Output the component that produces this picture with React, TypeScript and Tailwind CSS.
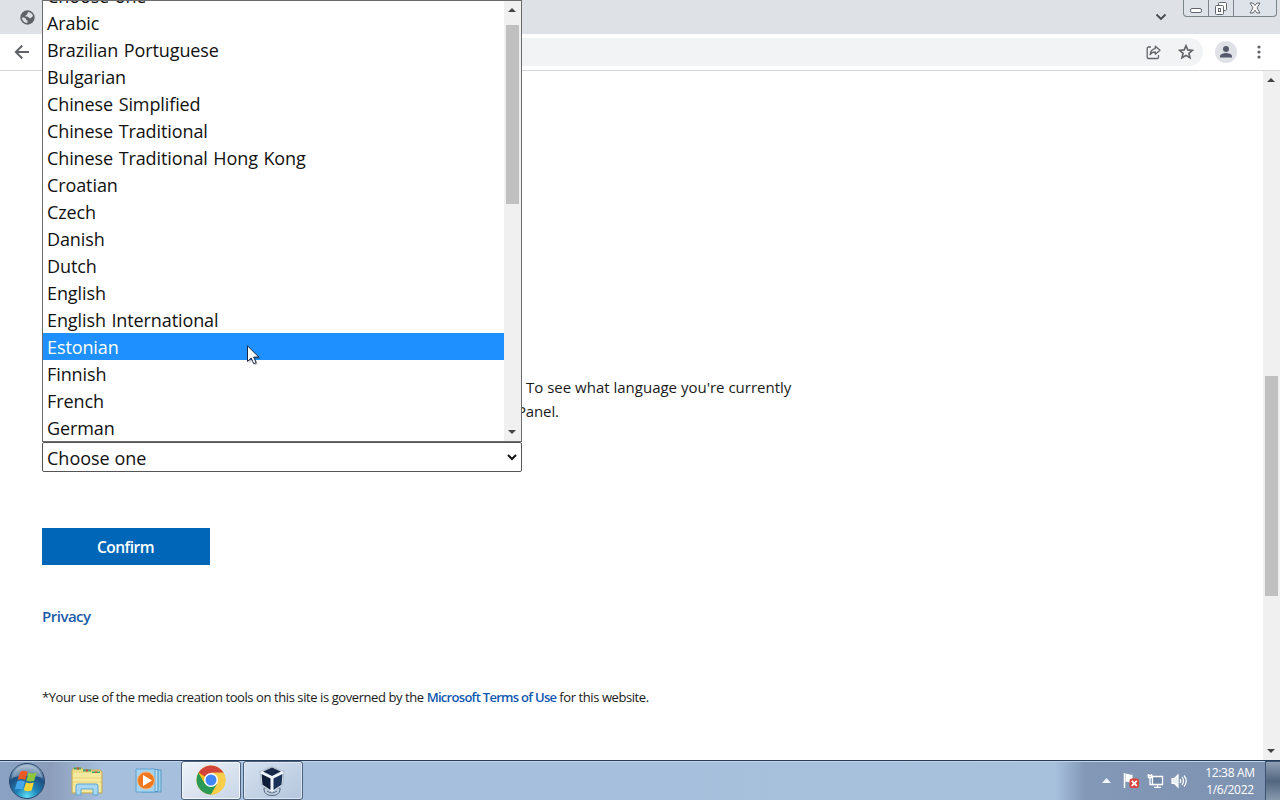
import React from 'react';

const LANGUAGES = [
    'Choose one',
    'Arabic',
    'Brazilian Portuguese',
    'Bulgarian',
    'Chinese Simplified',
    'Chinese Traditional',
    'Chinese Traditional Hong Kong',
    'Croatian',
    'Czech',
    'Danish',
    'Dutch',
    'English',
    'English International',
    'Estonian',
    'Finnish',
    'French',
    'German',
];

const Arrow: React.FC<{ down?: boolean }> = ({ down }) => (
    <svg width="8" height="4" viewBox="0 0 8 4" className={down ? 'mr-px rotate-180' : 'mr-px'}>
        <path d="M0 4 4 0l4 4z" fill="#444" />
    </svg>
);

const WindowButtons = () => (
    <div className="flex h-[17px] w-[94px] mr-[3px] rounded-b-[4px] border border-t-0 border-[#7d858c] bg-[#dde3e8]">
        <div className="w-[25px] border-r border-[#7d858c] flex items-end justify-center pb-[3px]">
            <div className="w-[12px] h-[5px] rounded-[2px] border border-[#60666c] bg-white" />
        </div>
        <div className="w-[25px] border-r border-[#7d858c] flex items-center justify-center">
            <svg width="14" height="14" viewBox="0 0 14 14" fill="#fff" stroke="#60666c">
                <rect x="4.5" y="1.5" width="8" height="8" rx="1" />
                <rect x="1.5" y="4.5" width="8" height="9" rx="1" />
                <rect x="4.5" y="7.5" width="2" height="3" />
            </svg>
        </div>
        <div className="flex-1 flex items-center justify-center">
            <svg width="12" height="12" viewBox="0 0 12 12" fill="#fff" stroke="#60666c">
                <path d="M1 1h3l2 2.5L8 1h3L8 5.9 11 11H8L6 8.3 4 11H1l3-5.1z" />
            </svg>
        </div>
    </div>
);

const TabStrip = () => (
    <div className="h-[34px] shrink-0 flex justify-between bg-[#dee1e6]">
        <div className="pl-[20px] pt-[10px]">
            <svg width="15" height="15" viewBox="0 0 15 15">
                <circle cx="7.5" cy="7.5" r="7.2" fill="#5f6368" />
                <path d="M8.2 1.9C6.9 2.7 8 4 7 4.7 6 5.2 5.4 5 5.5 6.4c1.6.2 3.3.2 3.7 1.6.9.4 2.3-.1 2.7-1 .3-.8.8-.9 1.2-.7C12.7 4 10.9 2 8.2 1.9zM1.9 7.6c1.6 0 3.7 0 4.1 1.6.1 1.2 1.5.8 1.7 1.8 0 .8-.6 1.1-.5 2C4.3 12.9 2.1 10.7 1.9 7.6z" fill="#dee1e6" />
            </svg>
        </div>
        <div className="flex items-start">
            <svg width="12" height="8" viewBox="0 0 12 8" className="mt-[13px] mr-[16px]" fill="none" stroke="#45484c" strokeWidth="1.8">
                <path d="M1.5 1.5 6 6l4.5-4.5" />
            </svg>
            <WindowButtons />
        </div>
    </div>
);

const Toolbar = () => (
    <div className="h-[37px] shrink-0 flex items-center bg-white border-b border-[#d5d7da] pl-[14px] pr-[19px]">
        <svg width="16" height="16" viewBox="0 0 16 16" fill="none" stroke="#5f6368" strokeWidth="1.9">
            <path d="M15 8H2M8.3 1.5 1.8 8l6.5 6.5" />
        </svg>
        <div className="ml-[90px] flex-1 h-[28px] rounded-full bg-[#f1f3f4] flex items-center justify-end gap-[17px] pr-[9px]">
            <svg width="15" height="15" viewBox="0 0 15 15" fill="none" stroke="#5f6368" strokeWidth="1.3" strokeLinejoin="round">
                <path d="M5 2H2.5a1.3 1.3 0 0 0-1.3 1.3v8.9a1.3 1.3 0 0 0 1.3 1.3h8.7a1.3 1.3 0 0 0 1.3-1.3V10" />
                <path d="M9.3 1.2 14 5.3 9.3 9.3V7C6.800 7 5.200 7.900 4.100 9.700 4.400 6.300 6.300 4 9.300 3.600z" />
            </svg>
            <svg width="16" height="16" viewBox="0 0 16 16" fill="none" stroke="#5f6368" strokeWidth="1.6">
                <path d="m8 1.7 1.8 4.2 4.6.4-3.500 3 1.100 4.500L8 11.400l-4 2.400 1.100-4.500-3.500-3 4.600-.4z" />
            </svg>
        </div>
        <svg width="22" height="22" viewBox="0 0 22 22" className="ml-[12px] mr-[20px]">
            <circle cx="11" cy="11" r="11" fill="#dfe1e7" />
            <circle cx="11" cy="8" r="3" fill="#55596a" />
            <path d="M5 16.5v-1.3c0-2.200 4-3.200 6-3.200s6 1 6 3.200v1.300z" fill="#55596a" />
        </svg>
        <svg width="4" height="14" viewBox="0 0 4 14" fill="#5f6368">
            <circle cx="2" cy="2" r="1.6" />
            <circle cx="2" cy="7" r="1.6" />
            <circle cx="2" cy="12" r="1.6" />
        </svg>
    </div>
);

const LanguageMenu = () => (
    <div className="absolute left-[42px] top-0 z-10 w-[480px] h-[442px] flex border border-[#6b6b6b] bg-white overflow-hidden">
        <ul className="flex-1 -mt-[19px] text-[18px] leading-[29px] tracking-[-0.1px] [word-spacing:1px]">
            {LANGUAGES.map((lang) => (
                <li
                    key={lang}
                    className={`h-[27px] pl-[4px] ${lang === 'Estonian' ? 'bg-[#1e90ff] text-white' : 'text-[#111]'}`}
                >
                    {lang}
                </li>
            ))}
        </ul>
        <div className="w-[17px] h-full bg-[#f0f0f0] flex flex-col items-center justify-between pt-[7px] pb-[7px]">
            <Arrow />
            <div className="w-[13px] h-[179px] bg-[#c0c0c0] mb-auto mt-[13px]" />
            <Arrow down />
        </div>
    </div>
);

const Cursor = () => (
    <svg width="16" height="22" viewBox="0 0 16 22" className="absolute left-[247px] top-[345px] z-20">
        <path d="M2 2.5v15.5l3.7-3.5 2.5 5.7 2.5-1.1-2.5-5.5h5.5z" fill="#000" opacity=".25" />
        <path d="M.5.8v15.7l3.7-3.5 2.5 5.7 2.5-1.1-2.5-5.5h5.1z" fill="#fff" stroke="#1b2540" />
    </svg>
);

const Page = () => (
    <div className="flex-1 min-h-0 flex bg-white">
        <main className="flex-1 pl-[42px] pt-[304px]">
            <p className="pl-[484px] text-[15px] leading-[24px] text-[#1a1a1a] whitespace-nowrap">
                To see what language you're currently
            </p>
            <p className="pl-[475px] text-[15px] leading-[24px] tracking-[-0.15px] text-[#1a1a1a]">Panel.</p>
            <div className="mt-[19px] w-[480px] h-[30px] border border-[#555] rounded-[2px] flex items-center justify-between pl-[4px] pr-[4px] text-[18px] text-[#111]">
                <span className="pt-[2px]">Choose one</span>
                <svg width="10" height="7" viewBox="0 0 10 7" fill="none" stroke="#111" strokeWidth="2">
                    <path d="M1 1l4 4 4-4" />
                </svg>
            </div>
            <button className="mt-[56px] w-[168px] h-[37px] pt-[2px] pr-[1px] flex items-center justify-center bg-[#0067b8] text-white text-[15.5px] font-semibold tracking-[-0.5px]">
                Confirm
            </button>
            <a className="block mt-[39px] text-[15px] leading-[24px] font-semibold tracking-[-0.5px] text-[#1a5ca8]">Privacy</a>
            <p className="mt-[59px] text-[13px] leading-[20px] tracking-[-0.42px] text-[#1a1a1a] whitespace-nowrap">
                <span>*Your use of the media creation tools on this site is governed by the </span>
                <a className="font-semibold tracking-[-0.7px] text-[#0f58b0]">Microsoft Terms of Use</a>
                <span> for this website.</span>
            </p>
        </main>
        <div className="w-[17px] bg-[#f0f0f0] flex flex-col items-center pt-[7px] pb-[7px]">
            <Arrow />
            <div className="w-[13px] h-[220px] bg-[#c0c0c0] mt-[294px] mb-auto" />
            <Arrow down />
        </div>
    </div>
);

const StartOrb = () => (
    <svg width="38" height="38" viewBox="0 0 38 38" className="ml-[8px]">
        <defs>
            <radialGradient id="orb" cx=".5" cy=".95" r=".9">
                <stop offset="0" stopColor="#5fe0f5" />
                <stop offset=".35" stopColor="#1f84b8" />
                <stop offset=".7" stopColor="#1c4f82" />
                <stop offset="1" stopColor="#8fa9c4" />
            </radialGradient>
        </defs>
        <circle cx="19" cy="19" r="17.5" fill="url(#orb)" stroke="#28486c" />
        <path d="M3.5 16C6 6 13 3 19 3s13 3 15.5 13C27 13 12 13 3.5 16z" fill="#fff" opacity=".3" />
        <path d="M12.5 9.5c2.5-1.3 4.8-1 7 .2L17.3 18c-2.2-1.3-4.5-1.5-7.7-.2z" fill="#ee5a24" />
        <path d="M20.5 10.5c2.5 1.3 4.8 1.3 8.2 0l-2.5 8.3c-2.5 1.2-5 1-7.9-.2z" fill="#8fc640" />
        <path d="M9.2 19.2c2.6-1.2 5-1 7.7.3l-2.3 8.2c-2.2-1.2-4.5-1.4-7.7-.3z" fill="#46a6ea" />
        <path d="M18 20.2c2.4 1.3 4.8 1.3 7.900.2l-2.300 8.200c-2.500 1.100-5 1-7.900-.3z" fill="#fbd437" />
    </svg>
);

const ExplorerIcon = () => (
    <svg width="34" height="30" viewBox="0 0 34 30">
        <path d="M2 27V4l2-2h8l2 2h16l2 2v21z" fill="#eedb86" stroke="#c5aa55" />
        <path d="M4 2.5h7M13 4.5h8M22 6.5h8" stroke="#3fa56b" strokeWidth="2" />
        <path d="M7 2.5h2M16 4.5h2M25 6.5h2" stroke="#d84a36" strokeWidth="2" />
        <path d="M3 7h28v19H3z" fill="#f6eaa0" />
        <path d="M3 12h28M3 16h28" stroke="#e9d47c" />
        <path d="M6 29v-9q0-2 2-2h18q2 0 2 2v9h-5v-6H11v6z" fill="#a8d7f2" stroke="#5ba5d2" />
    </svg>
);

const MediaIcon = () => (
    <svg width="28" height="26" viewBox="0 0 28 26">
        <path d="M6 2h20v22H6z" fill="#9fd0ec" stroke="#589ac5" />
        <path d="M3 1.5h20v22H3z" fill="#b8dff4" stroke="#4b94c6" />
        <path d="M1 1h19v23H1z" fill="#a7d3ee" stroke="#5da4d1" />
        <circle cx="11" cy="12.5" r="8.5" fill="#ee7820" stroke="#f8b26f" />
        <path d="M8 7v11l9-5.5z" fill="#fff" />
    </svg>
);

const ChromeIcon = () => (
    <svg width="30" height="30" viewBox="0 0 30 30">
        <circle cx="15" cy="15" r="14.5" fill="#fbc116" />
        <path d="M15 15 2.45 7.75A14.5 14.5 0 0 1 27.55 7.75H15z" fill="#d3443a" />
        <path d="M2.45 7.75A14.5 14.5 0 0 0 15 29.5l6.28-10.87L15 15l-6.28 3.62z" fill="#2c9a57" />
        <path d="M15 7.75h12.55A14.5 14.5 0 0 1 15 29.5l6.28-10.87z" fill="#f8cd4a" />
        <circle cx="15" cy="15" r="7" fill="#fff" />
        <circle cx="15" cy="15" r="5.5" fill="#4285f4" />
    </svg>
);

const VirtualBoxIcon = () => (
    <svg width="28" height="30" viewBox="0 0 28 30" className="mr-[2px]">
        <path d="M6 22v2q1 5.5 8 5.5t8-5.5v-2z" fill="#c5d3e2" stroke="#56687e" />
        <path d="M9 25q5 4 10 0" fill="none" stroke="#56687e" />
        <path d="M14 .7 26 5.5 24.5 19.5 14 26.5 3.5 19.5 2 5.5z" fill="#eef4fa" stroke="#8a9cb2" strokeWidth=".6" />
        <path d="M14 1.5 23 5.5 14 10 5 5.5z" fill="#16294a" />
        <path d="M3.5 8 12.5 12.5v11.5l-8-5.2z" fill="#0e1d38" />
        <path d="M24.5 8 15.5 12.5v11.5l8-5.2z" fill="#1b3158" />
    </svg>
);

const Tray = () => (
    <div className="flex items-center h-full">
        <svg width="9" height="5" viewBox="0 0 9 5" className="mr-[12px]">
            <path d="M0 5 4.5 0 9 5z" fill="#f3f7fb" />
        </svg>
        <svg width="17" height="17" viewBox="0 0 17 17" className="mr-[7px]">
            <path d="M1.5 1v15" stroke="#fff" strokeWidth="1.5" />
            <path d="M2.5 2c3-1 4 1.5 7 .5v8c-3 1-4-1.5-7-.5z" fill="#fff" />
            <rect x="6.5" y="6.5" width="9.5" height="9.5" rx="2.5" fill="#d8433c" />
            <path d="m8.8 8.8 5 5m0-5-5 5" stroke="#fff" strokeWidth="1.8" />
        </svg>
        <svg width="17" height="16" viewBox="0 0 17 16" className="mr-[7px]" fill="none" stroke="#fff" strokeWidth="1.3">
            <path d="M5.5 3.5h10v8h-10zM7 14.3h7M10.5 12v2" fill="#6f87a5" />
            <path d="M1.5 1v3.5h3V1M3 4.5v7h3M.5 2.5h5" />
        </svg>
        <svg width="17" height="16" viewBox="0 0 17 16" className="mr-[16px]" fill="none" stroke="#fff" strokeWidth="1.2">
            <path d="M1 5.5h2.5L7 2v12l-3.5-3.5H1z" fill="#e9eff5" />
            <path d="M9 6q1.5 2 0 4M11 4q3 4 0 8M13 2.5q4.5 5.5 0 11" />
        </svg>
        <div className="w-[52px] text-center text-[12px] leading-[17px] tracking-[-0.3px] text-white whitespace-nowrap">
            <div>12:38 AM</div>
            <div>1/6/2022</div>
        </div>
        <div className="ml-[9px] w-[15px] h-full border-l border-t border-[#3d5370] bg-linear-to-b from-[#8fa0b5] via-[#52667f] to-[#8699ae]" />
    </div>
);

const Taskbar = () => (
    <div className="h-[40px] shrink-0 flex items-center justify-between border-t border-[#263c5c] bg-[linear-gradient(to_right,#8aa2c4_0px,#8b9dba_50px,#a6bfdc_100px,#a7c1dd_1055px,#8298b6_1085px,#7d92b0_1280px)] shadow-[inset_0_1px_0_#c3d3e6]">
        <div className="flex items-center h-full">
            <StartOrb />
            <div className="ml-[24px]"><ExplorerIcon /></div>
            <div className="ml-[31px]"><MediaIcon /></div>
            <div className="ml-[18px] w-[60px] h-[39px] flex items-center justify-center rounded-[3px] border border-[#4e617c] bg-linear-to-br from-[#eef3f9] to-[#c8d5e6] shadow-[inset_0_0_0_1px_#f4f8fc] pb-[1px] pr-[1px]">
                <ChromeIcon />
            </div>
            <div className="ml-[2px] w-[60px] h-[39px] flex items-center justify-center rounded-[3px] border border-[#4e617c] bg-linear-to-br from-[#d5e1ef] to-[#b4c6dd] shadow-[inset_0_0_0_1px_#dce7f3]">
                <VirtualBoxIcon />
            </div>
        </div>
        <Tray />
    </div>
);

export default function App() {
    return (
        <div className="relative w-[1280px] h-[800px] flex flex-col overflow-hidden bg-white font-['Open_Sans','Noto_Sans',sans-serif]">
            <TabStrip />
            <Toolbar />
            <Page />
            <Taskbar />
            <LanguageMenu />
            <Cursor />
        </div>
    );
}
